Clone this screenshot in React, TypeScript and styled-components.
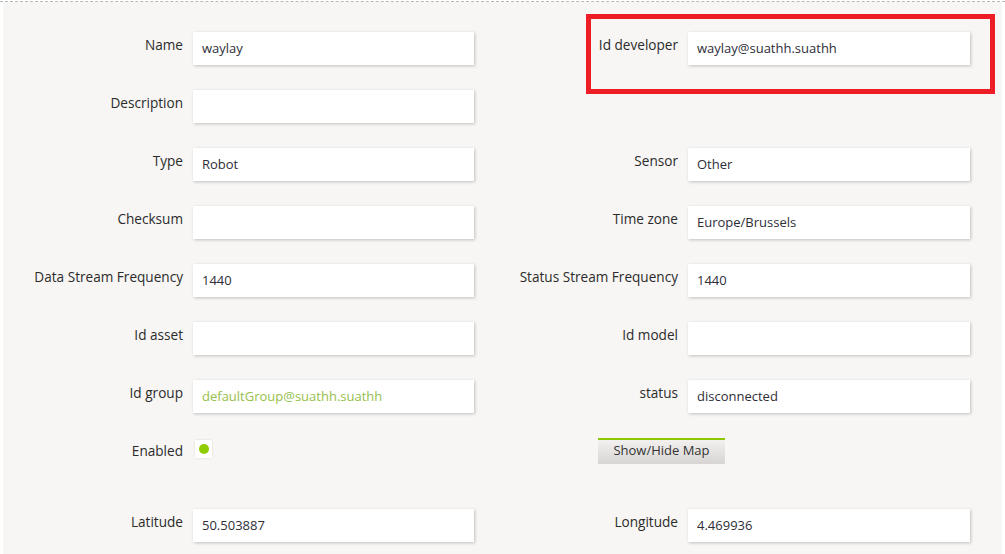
import React from "react";
import styled, { createGlobalStyle } from "styled-components";

const Global = createGlobalStyle`
  html, body { margin: 0; padding: 0; background: #ffffff; }
  body { font-family: "Open Sans", "Liberation Sans", sans-serif; }
  * { box-sizing: border-box; }
`;

const Frame = styled.div`
  position: relative;
  margin-top: 1px;
  border-top: 1px dashed #b8b8b8;
  height: 553px;
  overflow: hidden;
`;

const Panel = styled.div`
  margin: 0 3px;
  height: 100%;
  background: #f7f6f4;
  padding-top: 30px;
`;

const Form = styled.div`
  display: grid;
  grid-template-columns: 180px 281px 194px 282px;
  grid-template-rows: repeat(7, 33px) 46px 33px;
  column-gap: 10px;
  row-gap: 25px;
`;

const Label = styled.label<{ $col: number }>`
  grid-column: ${(p) => p.$col};
  text-align: right;
  padding-top: 4px;
  font-size: 13.6px;
  line-height: 18px;
  color: #2b2b2b;
  white-space: nowrap;
`;

const Field = styled.input<{ $col: number; $accent?: boolean }>`
  grid-column: ${(p) => p.$col};
  height: 33px;
  width: 100%;
  border: none;
  outline: none;
  background: #ffffff;
  box-shadow: 1px 1px 3px rgba(0, 0, 0, 0.22);
  padding: 0 9px 2px;
  font-family: "Open Sans", "Liberation Sans", sans-serif;
  font-size: 13px;
  color: ${(p) => (p.$accent ? "#96c04c" : "#2e2e38")};
`;

const Check = styled.div`
  grid-column: 2;
  width: 17px;
  height: 18px;
  margin: 2px 0 0 2px;
  background: #ffffff;
  box-shadow: 0 0 2px rgba(0, 0, 0, 0.12);
  display: flex;
  align-items: center;
  justify-content: center;
`;

const Dot = styled.span`
  width: 10px;
  height: 10px;
  border-radius: 50%;
  background: #8fcc00;
`;

const MapButton = styled.button`
  grid-column: 3 / span 2;
  justify-self: start;
  margin-left: 114px;
  width: 127px;
  height: 26px;
  border: none;
  border-top: 2px solid #8cc800;
  background: linear-gradient(#f2f1f0, #d7d4d2);
  font-family: "Open Sans", "Liberation Sans", sans-serif;
  font-size: 13px;
  line-height: 18px;
  color: #333333;
  padding: 0 0 4px;
`;

const Highlight = styled.div`
  position: absolute;
  left: 586px;
  top: 12px;
  width: 409px;
  height: 80px;
  border: 5px solid #ee1c25;
  pointer-events: none;
`;

type Row = {
  left?: [string, string, boolean?];
  right?: [string, string];
};

const rows: Row[] = [
  { left: ["Name", "waylay"], right: ["Id developer", "waylay@suathh.suathh"] },
  { left: ["Description", ""] },
  { left: ["Type", "Robot"], right: ["Sensor", "Other"] },
  { left: ["Checksum", ""], right: ["Time zone", "Europe/Brussels"] },
  {
    left: ["Data Stream Frequency", "1440"],
    right: ["Status Stream Frequency", "1440"],
  },
  { left: ["Id asset", ""], right: ["Id model", ""] },
  {
    left: ["Id group", "defaultGroup@suathh.suathh", true],
    right: ["status", "disconnected"],
  },
];

export default function App() {
  return (
    <>
      <Global />
      <Frame>
        <Panel>
          <Form>
            {rows.map((r, i) => (
              <React.Fragment key={i}>
                {r.left && (
                  <>
                    <Label $col={1}>{r.left[0]}</Label>
                    <Field
                      $col={2}
                      $accent={r.left[2]}
                      defaultValue={r.left[1]}
                      readOnly
                    />
                  </>
                )}
                {r.right && (
                  <>
                    <Label $col={3}>{r.right[0]}</Label>
                    <Field $col={4} defaultValue={r.right[1]} readOnly />
                  </>
                )}
                {!r.right && <span style={{ gridColumn: "3 / span 2" }} />}
              </React.Fragment>
            ))}
            <Label $col={1}>Enabled</Label>
            <Check>
              <Dot />
            </Check>
            <MapButton>Show/Hide Map</MapButton>
            <Label $col={1}>Latitude</Label>
            <Field $col={2} defaultValue="50.503887" readOnly />
            <Label $col={3}>Longitude</Label>
            <Field $col={4} defaultValue="4.469936" readOnly />
          </Form>
        </Panel>
        <Highlight />
      </Frame>
    </>
  );
}
